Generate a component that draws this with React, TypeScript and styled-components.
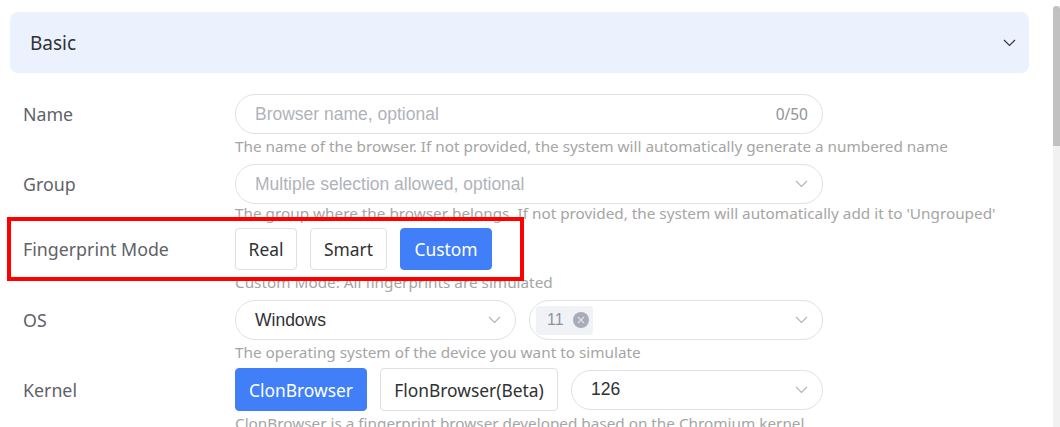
import * as React from 'react';
import styled, { createGlobalStyle } from 'styled-components';

const GlobalStyle = createGlobalStyle`
  html, body {
    margin: 0;
    padding: 0;
    background: #ffffff;
  }
  body {
    font-family: "Noto Sans", "Open Sans", sans-serif;
  }
`;

const Viewport = styled.div`
  position: relative;
  height: 100vh;
  overflow: hidden;
`;

const Page = styled.div`
  position: relative;
  padding: 12px 31px 0 10px;
`;

const ScrollTrack = styled.div`
  position: absolute;
  top: 6px;
  right: 0;
  bottom: 0;
  width: 7px;
  background: #f1f1f1;
`;

const ScrollThumb = styled.div`
  height: 140px;
  background: #c1c1c1;
  border-radius: 4px 4px 0 0;
`;

const SectionHeader = styled.div`
  height: 61px;
  background: #ebf2fe;
  border-radius: 8px;
  display: flex;
  align-items: center;
  justify-content: space-between;
  padding: 0 13px 0 20px;
`;

const SectionTitle = styled.span`
  font-size: 19px;
  color: #303133;
`;

const Form = styled.div`
  margin-top: 21px;
  padding-left: 13px;
`;

const Row = styled.div<{ $after?: number }>`
  display: grid;
  grid-template-columns: 212px 588px;
  margin-bottom: ${p => p.$after ?? 6}px;
`;

const Label = styled.div<{ $h?: number }>`
  height: ${p => p.$h ?? 40}px;
  display: flex;
  align-items: center;
  font-size: 17.8px;
  color: #5f6268;
`;

const Field = styled.div`
  display: flex;
  flex-direction: column;
`;

const Controls = styled.div`
  display: flex;
  align-items: center;
  gap: 13px;
`;

const Hint = styled.div<{ $lift?: number }>`
  height: 24px;
  line-height: 24px;
  margin-top: ${p => -(p.$lift ?? 0)}px;
  margin-bottom: ${p => p.$lift ?? 0}px;
  font-size: 15.3px;
  color: #a5a5a5;
  white-space: nowrap;
`;

const Pill = styled.div<{ $w?: number; $h?: number }>`
  box-sizing: border-box;
  width: ${p => (p.$w ? `${p.$w}px` : '100%')};
  height: ${p => p.$h ?? 40}px;
  border: 1px solid #dfe1e7;
  border-radius: 20px;
  display: flex;
  align-items: center;
  padding: 0 14px 0 19px;
  gap: 8px;
`;

const Value = styled.span<{ $placeholder?: boolean }>`
  flex: 1;
  font-family: "Liberation Sans", Arial, sans-serif;
  font-size: 17.5px;
  color: ${p => (p.$placeholder ? '#b0b3ba' : '#303133')};
  white-space: nowrap;
`;

const Counter = styled.span`
  font-size: 15.5px;
  color: #8f939a;
`;

const Button = styled.button<{ $active?: boolean; $w: number; $h?: number }>`
  box-sizing: border-box;
  width: ${p => p.$w}px;
  height: ${p => p.$h ?? 42}px;
  border-radius: 4px;
  border: 1px solid ${p => (p.$active ? '#407ff8' : '#dcdfe6')};
  background: ${p => (p.$active ? '#407ff8' : '#ffffff')};
  color: ${p => (p.$active ? '#ffffff' : '#303133')};
  font-family: "Noto Sans", "Open Sans", sans-serif;
  font-size: 17.4px;
  padding: 0;
  cursor: pointer;
`;

const Tag = styled.span`
  display: inline-flex;
  align-items: center;
  gap: 9px;
  height: 29px;
  padding: 0 4px 0 11px;
  margin-left: -13px;
  border-radius: 4px;
  background: #f0f2f5;
  font-family: "Liberation Sans", Arial, sans-serif;
  font-size: 16px;
  color: #909399;
`;

const TagClose = styled.span`
  width: 16px;
  height: 16px;
  border-radius: 50%;
  background: #a9acb8;
  display: inline-flex;
  align-items: center;
  justify-content: center;
`;

const Spacer = styled.span`
  flex: 1;
`;

const Annotation = styled.div`
  position: absolute;
  left: 7px;
  top: 217px;
  width: 517px;
  height: 64px;
  box-sizing: border-box;
  border: 4px solid #ff0000;
  pointer-events: none;
`;

const Chevron = ({ color = '#b0b3ba' }: { color?: string }) => (
  <svg width="13" height="8" viewBox="0 0 13 8" fill="none">
    <polyline points="1,1 6.5,6.5 12,1" stroke={color} strokeWidth="1.1" />
  </svg>
);

const CloseIcon = () => (
  <svg width="8" height="8" viewBox="0 0 8 8">
    <path d="M1 1 L7 7 M7 1 L1 7" stroke="#dfe1e6" strokeWidth="1.2" />
  </svg>
);

const App = () => (
  <>
    <GlobalStyle />
    <Viewport>
      <Page>
        <SectionHeader>
          <SectionTitle>Basic</SectionTitle>
          <Chevron color="#303133" />
        </SectionHeader>
        <Form>
          <Row>
            <Label>Name</Label>
            <Field>
              <Pill>
                <Value $placeholder>Browser name, optional</Value>
                <Counter>0/50</Counter>
              </Pill>
              <Hint>The name of the browser. If not provided, the system will automatically generate a numbered name</Hint>
            </Field>
          </Row>
          <Row $after={0}>
            <Label>Group</Label>
            <Field>
              <Pill>
                <Value $placeholder>Multiple selection allowed, optional</Value>
                <Chevron />
              </Pill>
              <Hint $lift={3}>The group where the browser belongs. If not provided, the system will automatically add it to 'Ungrouped'</Hint>
            </Field>
          </Row>
          <Row>
            <Label $h={42}>Fingerprint Mode</Label>
            <Field>
              <Controls>
                <Button $w={62}>Real</Button>
                <Button $w={77}>Smart</Button>
                <Button $w={92} $active>Custom</Button>
              </Controls>
              <Hint>Custom Mode: All fingerprints are simulated</Hint>
            </Field>
          </Row>
          <Row $after={4}>
            <Label>OS</Label>
            <Field>
              <Controls>
                <Pill $w={281}>
                  <Value>Windows</Value>
                  <Chevron />
                </Pill>
                <Pill $w={294}>
                  <Tag>
                    11
                    <TagClose>
                      <CloseIcon />
                    </TagClose>
                  </Tag>
                  <Spacer />
                  <Chevron />
                </Pill>
              </Controls>
              <Hint>The operating system of the device you want to simulate</Hint>
            </Field>
          </Row>
          <Row>
            <Label $h={43}>Kernel</Label>
            <Field>
              <Controls>
                <Button $w={132} $h={43} $active>ClonBrowser</Button>
                <Button $w={178} $h={43}>FlonBrowser(Beta)</Button>
                <Pill $w={252}>
                  <Value>126</Value>
                  <Chevron />
                </Pill>
              </Controls>
              <Hint>ClonBrowser is a fingerprint browser developed based on the Chromium kernel</Hint>
            </Field>
          </Row>
        </Form>
        <Annotation />
      </Page>
      <ScrollTrack>
        <ScrollThumb />
      </ScrollTrack>
    </Viewport>
  </>
);

export default App;
